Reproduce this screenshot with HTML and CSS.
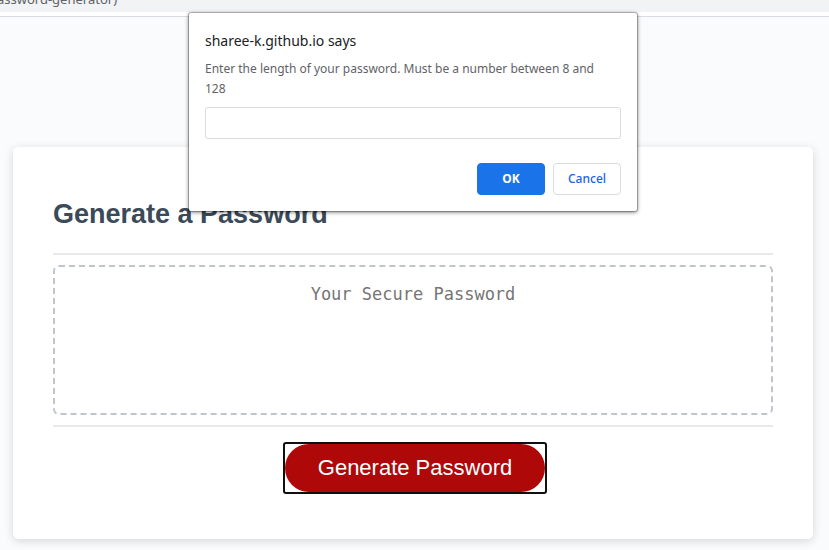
FILE: index.html
```html
<!DOCTYPE html>
<html lang="en">
<head>
<meta charset="utf-8">
<meta name="viewport" content="width=device-width, initial-scale=1">
<title>Password Generator</title>
<link rel="stylesheet" href="styles.css">
</head>
<body>
<header class="bookmarks"><span class="bookmark">password-generator)</span></header>
<main class="page">
  <section class="card">
    <div class="card-header"><h1>Generate a Password</h1></div>
    <div class="card-body">
      <textarea class="password" readonly placeholder="Your Secure Password" aria-label="Generated password"></textarea>
    </div>
    <div class="card-footer">
      <button class="generate" type="button">Generate Password</button>
    </div>
  </section>
</main>
<form class="prompt" role="dialog" aria-labelledby="prompt-title">
  <h2 class="prompt-title" id="prompt-title">sharee-k.github.io says</h2>
  <label class="prompt-message" for="length">Enter the length of your password. Must be a number between 8 and 128</label>
  <input class="prompt-input" id="length" type="text">
  <div class="prompt-actions">
    <button class="action action-ok" type="button">OK</button>
    <button class="action" type="button">Cancel</button>
  </div>
</form>
</body>
</html>
```
FILE: styles.css
```css
* {
  box-sizing: border-box;
}

body {
  margin: 0;
  min-height: 100vh;
  display: flex;
  flex-direction: column;
  background: #fafbfd;
  font-family: "Liberation Sans", Arial, sans-serif;
  overflow: hidden;
}

/* Browser toolbar */
.bookmarks {
  display: flex;
  align-items: flex-end;
  height: 17px;
  padding-bottom: 9px;
  overflow: hidden;
  background: linear-gradient(#f1f3f4 12px, #fff 12px);
  border-bottom: 1px solid #dadce0;
}

.bookmark {
  flex: none;
  margin-left: -11px;
  color: #5f6368;
  font: 13px/16px "Noto Sans", sans-serif;
}

/* Page */
.page {
  flex: 1;
  padding: 130px 16px 11px 13px;
}

.card {
  max-width: 800px;
  margin: 0 auto;
  padding: 40px 40px 47px;
  background: #fff;
  border-radius: 5px;
  box-shadow: rgba(0, 0, 0, 0.15) 0 2px 10px;
}

.card-header {
  padding: 11px 0 23px;
  border-bottom: 2px solid #e7e9eb;
}

h1 {
  margin: 0;
  color: #3b4a58;
  font-size: 27px;
  line-height: 32px;
}

.card-body {
  padding: 10px 0;
  border-bottom: 2px solid #e7e9eb;
}

.password {
  display: block;
  width: 100%;
  height: 150px;
  padding: 16px;
  border: 2px dashed #c0c4ce;
  border-radius: 6px;
  resize: none;
  background: #fff;
  text-align: center;
  font: 17px/22px "DejaVu Sans Mono", monospace;
}

.password::placeholder {
  color: #757575;
}

.card-footer {
  display: flex;
  justify-content: center;
  padding: 17px 0 0 4px;
}

.generate {
  width: 260px;
  height: 48px;
  padding: 0;
  border: 0;
  background: #ae0808;
  border-radius: 24px;
  color: #fff;
  font: 22px/26px "Liberation Sans", Arial, sans-serif;
  position: relative;
}

/* Focus ring keeps its own corner radius, independent of the pill */
.generate::after {
  content: "";
  position: absolute;
  inset: -2px;
  border: 2px solid #101010;
  border-radius: 3px;
}

/* Prompt dialog */
.prompt {
  position: absolute;
  top: 13px;
  left: 189px;
  width: 448px;
  padding: 16px;
  background: #fff;
  border-radius: 2px;
  box-shadow: 0 0 0 1px rgba(0, 0, 0, 0.22), 0 1px 4px rgba(0, 0, 0, 0.6);
  font-family: "Noto Sans", sans-serif;
}

.prompt-title {
  margin: 0 0 6px;
  color: #202124;
  font-size: 14px;
  font-weight: 400;
  line-height: 24px;
}

.prompt-message {
  display: block;
  margin-bottom: 8px;
  padding-right: 16px;
  color: #5f6368;
  font-size: 12px;
  line-height: 20px;
}

.prompt-input {
  display: block;
  width: 100%;
  height: 32px;
  padding: 0 8px;
  border: 1px solid #dadce0;
  border-radius: 3px;
  font: inherit;
}

.prompt-actions {
  display: flex;
  justify-content: flex-end;
  gap: 8px;
  margin-top: 24px;
}

.action {
  width: 68px;
  height: 32px;
  padding: 0;
  border: 1px solid #dadce0;
  border-radius: 4px;
  background: #fff;
  color: #1a63e8;
  font: 500 12px/16px "Noto Sans", sans-serif;
}

.action-ok {
  border-color: #1a73e8;
  background: #1a73e8;
  color: #fff;
  font-weight: 700;
}
```
